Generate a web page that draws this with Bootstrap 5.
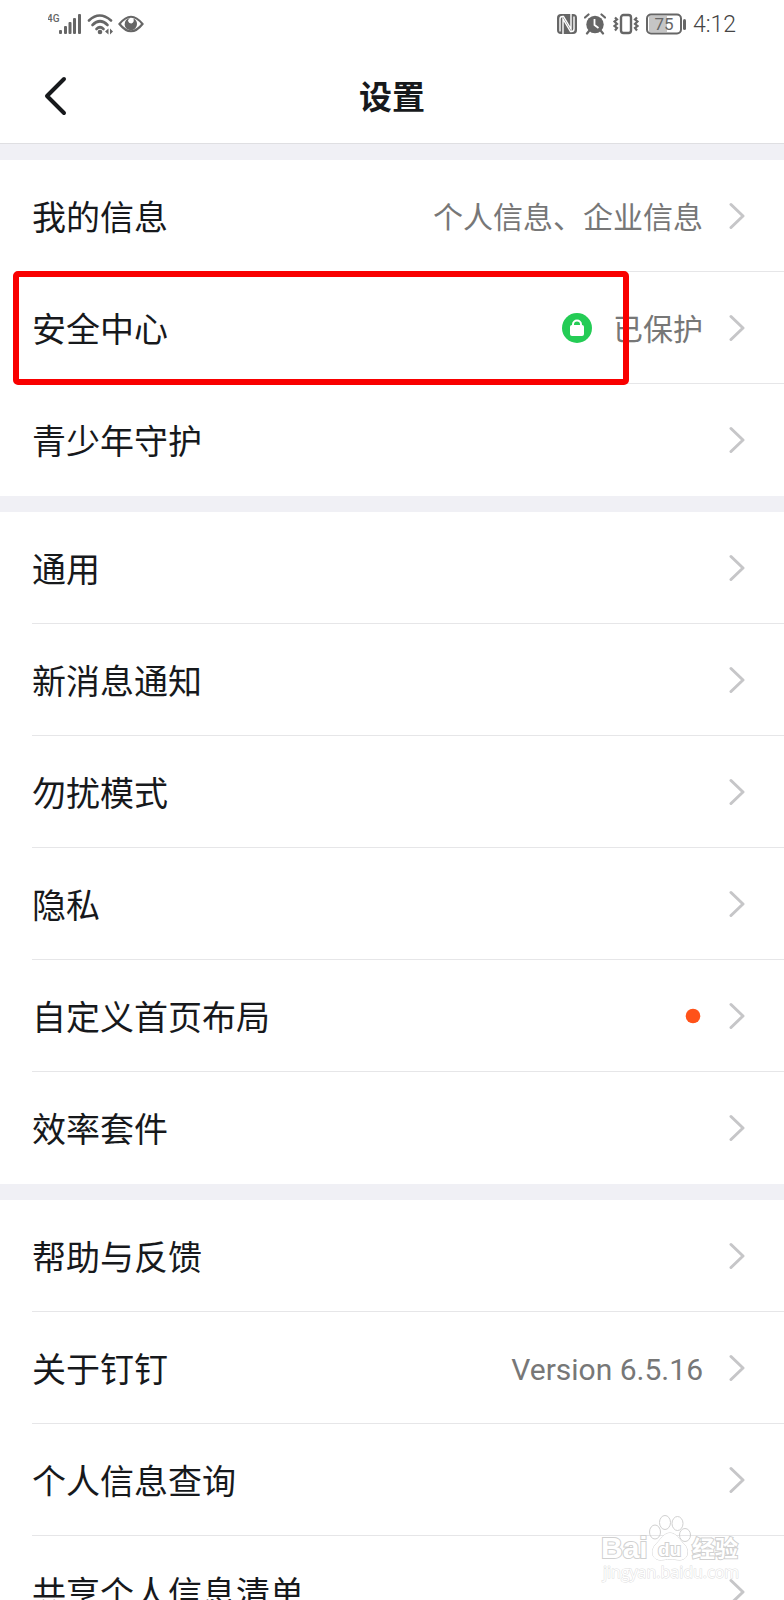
<!DOCTYPE html>
<html lang="zh-CN">
<head>
<meta charset="utf-8">
<meta name="viewport" content="width=device-width, initial-scale=1">
<title>设置</title>
<link rel="stylesheet" href="https://cdn.jsdelivr.net/npm/bootstrap@5.3.0/dist/css/bootstrap.min.css">
<style>
  body { font-family: Roboto, "Noto Sans CJK SC", sans-serif; color: #17191c; background: #fff; }
  .screen { background: #f0f0f5; }
  .status-bar { height: 48px; padding: 0 48px; color: #666; }
  .status-bar svg { display: block; fill: currentColor; }
  .status-end { gap: 7px; }
  .clock { font-size: 23px; line-height: 28px; padding-top: 2px; font-weight: 300; color: #444; }
  .title-bar { height: 96px; border-bottom: 1px solid #dfdfe2; }
  .title-bar h1 { font-size: 33px; line-height: 48px; padding-top: 5px; font-weight: 700; }
  .back-btn { left: 39px; top: 24px; line-height: 0; color: inherit; }
  .group { margin-top: 16px; }
  .setting { height: 112px; padding-right: 39px; margin-left: 32px; color: inherit; border-bottom: 1px solid #e6e6e8; }
  .setting:last-child { border-bottom-color: transparent; }
  .setting-name { font-size: 34px; line-height: 48px; padding-top: 4px; }
  .setting-value { font-size: 30px; line-height: 44px; padding-top: 4px; color: #777; }
  .setting-end { gap: 26px; }
  .lock-gap { gap: 21px; }
  .chevron { fill: none; stroke: #c6c6c8; stroke-width: 3; stroke-linecap: round; stroke-linejoin: round; }
  .highlight { inset: -1px 155px -2px -19px; border: 6px solid #f90000; border-radius: 5px; z-index: 2; pointer-events: none; }
  .watermark { right: 36px; bottom: 10px; pointer-events: none; }
</style>
</head>
<body>
<svg width="0" height="0" class="position-absolute" aria-hidden="true">
  <symbol id="go" viewBox="0 0 16 28"><path d="M2 2.500L14 14 2 25.500"/></symbol>
</svg>
<div class="screen vh-100 overflow-hidden position-relative d-flex flex-column">
  <header class="bg-white flex-shrink-0">
    <div class="status-bar d-flex align-items-center justify-content-between">
      <div class="d-flex align-items-center">
        <svg width="34" height="22" viewBox="0 0 34 22" role="img" aria-label="4G 信号">
          <text x="-1" y="9" font-size="10" font-weight="500">4G</text>
          <rect x="11" y="17" width="3" height="4" rx="1"/><rect x="16" y="13" width="3" height="8" rx="1"/><rect x="20.500" y="9" width="3" height="12" rx="1"/><rect x="25" y="5" width="3" height="16" rx="1"/><rect x="30" y="1" width="3" height="20" rx="1"/>
        </svg>
        <svg class="ms-1" width="28" height="22" viewBox="0 0 28 22" aria-label="WLAN" role="img">
          <g fill="none" stroke="currentColor" stroke-width="2.600" stroke-linecap="round"><path d="M3 7.500Q13.500-2.500 25 7.500"/><path d="M6.500 12Q14 4.500 21.500 12"/><path d="M10.500 16Q14 12.500 17.500 16"/></g>
          <circle cx="14" cy="19" r="2.300"/><path d="M22.500 15.500v6L19 18.500zM24 15.500l3 3-3 3z"/>
        </svg>
        <svg class="ms-1" width="26" height="20" viewBox="0 0 26 20" aria-label="护眼" role="img">
          <path d="M1.500 10Q13-4.500 24.500 10 13 24.500 1.500 10z" fill="none" stroke="currentColor" stroke-width="2.200"/>
          <path d="M12 4a6.200 6.200 0 1 0 7 6q0-4-3.500-5.500 1 4-2 5-3 0-3.500-3Q10.500 5 12 4z"/>
        </svg>
      </div>
      <div class="status-end d-flex align-items-center">
        <svg width="20" height="22" viewBox="0 0 20 22" aria-label="NFC" role="img">
          <rect x="0" y="1" width="20" height="20" rx="4"/>
          <g fill="none" stroke="#fff" stroke-width="1.400"><path d="M3 18.500V6q0-2.500 2.500-2.500h1L14 16V1"/><path d="M6 21V6l7.500 12.500h1q2.500 0 2.500-2.500V3.500"/></g>
        </svg>
        <svg width="22" height="22" viewBox="0 0 22 22" aria-label="闹钟" role="img">
          <circle cx="11" cy="11.500" r="8.700"/>
          <path d="M1 4.500L4.500 1.500M21 4.500L17.500 1.500M5 18l-2 2.500M17 18l2 2.500" stroke="currentColor" stroke-width="2.200" stroke-linecap="round"/>
          <path d="M10.500 6v6l4 3" fill="none" stroke="#fff" stroke-width="1.800"/>
        </svg>
        <svg width="26" height="22" viewBox="0 0 26 22" aria-label="振动" role="img">
          <g fill="none" stroke="currentColor"><rect x="8" y="2" width="10" height="18" rx="2.500" stroke-width="2.400"/><path d="M2 4.500l2 2-2.500 2L4 11l-2.500 2L4 15l-2 2.500M24 4.500l-2 2 2.500 2L22 11l2.500 2-2.500 2 2 2.500" stroke-width="2.200"/></g>
        </svg>
        <svg width="40" height="22" viewBox="0 0 40 22" aria-label="电量 75%" role="img">
          <rect x="3" y="3" width="18" height="16" fill="#c5c5c5"/>
          <rect x="1" y="1.500" width="34" height="19" rx="4" fill="none" stroke="currentColor" stroke-width="2"/>
          <rect x="37" y="6" width="3" height="11" rx="1.500"/>
          <text x="18" y="17" font-size="17" text-anchor="middle">75</text>
        </svg>
        <span class="clock">4:12</span>
      </div>
    </div>
    <nav class="title-bar position-relative d-flex align-items-center justify-content-center">
      <button type="button" class="back-btn btn p-0 border-0 position-absolute" aria-label="返回">
        <svg width="32" height="48" viewBox="0 0 32 48" fill="none" stroke="currentColor" stroke-width="4" stroke-linecap="round" stroke-linejoin="round"><path d="M25 7L8 24l17 17"/></svg>
      </button>
      <h1 class="m-0">设置</h1>
    </nav>
  </header>

  <section class="group bg-white flex-shrink-0">
    <a href="#" class="setting d-flex align-items-center justify-content-between text-decoration-none">
      <span class="setting-name">我的信息</span>
      <span class="setting-end d-flex align-items-center"><span class="setting-value">个人信息、企业信息</span><svg class="chevron" width="16" height="28"><use href="#go"/></svg></span>
    </a>
    <a href="#" class="setting position-relative d-flex align-items-center justify-content-between text-decoration-none">
      <span class="setting-name">安全中心</span>
      <span class="setting-end d-flex align-items-center">
        <span class="lock-gap d-flex align-items-center">
          <svg width="30" height="30" viewBox="0 0 30 30" aria-hidden="true"><circle cx="15" cy="15" r="15" fill="#24cc55"/><rect x="8" y="12" width="14" height="11" rx="2" fill="#fff"/><path d="M11 13v-1.500a4 4 0 0 1 8 0V13" fill="none" stroke="#fff" stroke-width="2"/></svg>
          <span class="setting-value">已保护</span>
        </span>
        <svg class="chevron" width="16" height="28"><use href="#go"/></svg>
      </span>
      <span class="highlight position-absolute"></span>
    </a>
    <a href="#" class="setting d-flex align-items-center justify-content-between text-decoration-none">
      <span class="setting-name">青少年守护</span><svg class="chevron" width="16" height="28"><use href="#go"/></svg>
    </a>
  </section>

  <section class="group bg-white flex-shrink-0">
    <a href="#" class="setting d-flex align-items-center justify-content-between text-decoration-none">
      <span class="setting-name">通用</span><svg class="chevron" width="16" height="28"><use href="#go"/></svg>
    </a>
    <a href="#" class="setting d-flex align-items-center justify-content-between text-decoration-none">
      <span class="setting-name">新消息通知</span><svg class="chevron" width="16" height="28"><use href="#go"/></svg>
    </a>
    <a href="#" class="setting d-flex align-items-center justify-content-between text-decoration-none">
      <span class="setting-name">勿扰模式</span><svg class="chevron" width="16" height="28"><use href="#go"/></svg>
    </a>
    <a href="#" class="setting d-flex align-items-center justify-content-between text-decoration-none">
      <span class="setting-name">隐私</span><svg class="chevron" width="16" height="28"><use href="#go"/></svg>
    </a>
    <a href="#" class="setting d-flex align-items-center justify-content-between text-decoration-none">
      <span class="setting-name">自定义首页布局</span>
      <span class="setting-end d-flex align-items-center"><svg width="20" height="20" aria-hidden="true"><circle cx="10" cy="10" r="7.300" fill="#ff5219"/></svg><svg class="chevron" width="16" height="28"><use href="#go"/></svg></span>
    </a>
    <a href="#" class="setting d-flex align-items-center justify-content-between text-decoration-none">
      <span class="setting-name">效率套件</span><svg class="chevron" width="16" height="28"><use href="#go"/></svg>
    </a>
  </section>

  <section class="group bg-white flex-shrink-0">
    <a href="#" class="setting d-flex align-items-center justify-content-between text-decoration-none">
      <span class="setting-name">帮助与反馈</span><svg class="chevron" width="16" height="28"><use href="#go"/></svg>
    </a>
    <a href="#" class="setting d-flex align-items-center justify-content-between text-decoration-none">
      <span class="setting-name">关于钉钉</span>
      <span class="setting-end d-flex align-items-center"><span class="setting-value">Version 6.5.16</span><svg class="chevron" width="16" height="28"><use href="#go"/></svg></span>
    </a>
    <a href="#" class="setting d-flex align-items-center justify-content-between text-decoration-none">
      <span class="setting-name">个人信息查询</span><svg class="chevron" width="16" height="28"><use href="#go"/></svg>
    </a>
    <a href="#" class="setting d-flex align-items-center justify-content-between text-decoration-none">
      <span class="setting-name">共享个人信息清单</span><svg class="chevron" width="16" height="28"><use href="#go"/></svg>
    </a>
  </section>

  <svg class="watermark position-absolute" width="148" height="78" viewBox="600 1512 148 78" fill="#fff" stroke="#d0d0d0" stroke-width="2" paint-order="stroke" role="img" aria-label="百度经验">
    <g stroke-width="1" fill="none"><ellipse cx="655" cy="1532" rx="5.500" ry="7"/><ellipse cx="665" cy="1522.500" rx="5.500" ry="7"/><ellipse cx="677.500" cy="1523.500" rx="5.500" ry="7"/><ellipse cx="685" cy="1535" rx="5.500" ry="6.500"/></g>
    <path stroke-width="1" d="M670 1533c-6 0-9 6-13 10-6 5-7 16 3 17 5 0 6-1 10-1s6 1 10 1c10-1 9-12 3-17-4-4-7-10-13-10z"/>
    <g font-family="Liberation Sans, sans-serif" font-weight="700">
      <text x="601" y="1558" font-size="30">Bai</text>
      <text x="658" y="1556" font-size="19">du</text>
      <text x="692" y="1557" font-size="23" font-family="Noto Sans CJK SC, sans-serif">经验</text>
    </g>
    <text x="603" y="1578" font-size="16" font-family="Open Sans, sans-serif" stroke="#dedede" stroke-width="1">jingyan.baidu.com</text>
  </svg>
</div>
<script src="https://cdn.jsdelivr.net/npm/bootstrap@5.3.0/dist/js/bootstrap.bundle.min.js"></script>
</body>
</html>
